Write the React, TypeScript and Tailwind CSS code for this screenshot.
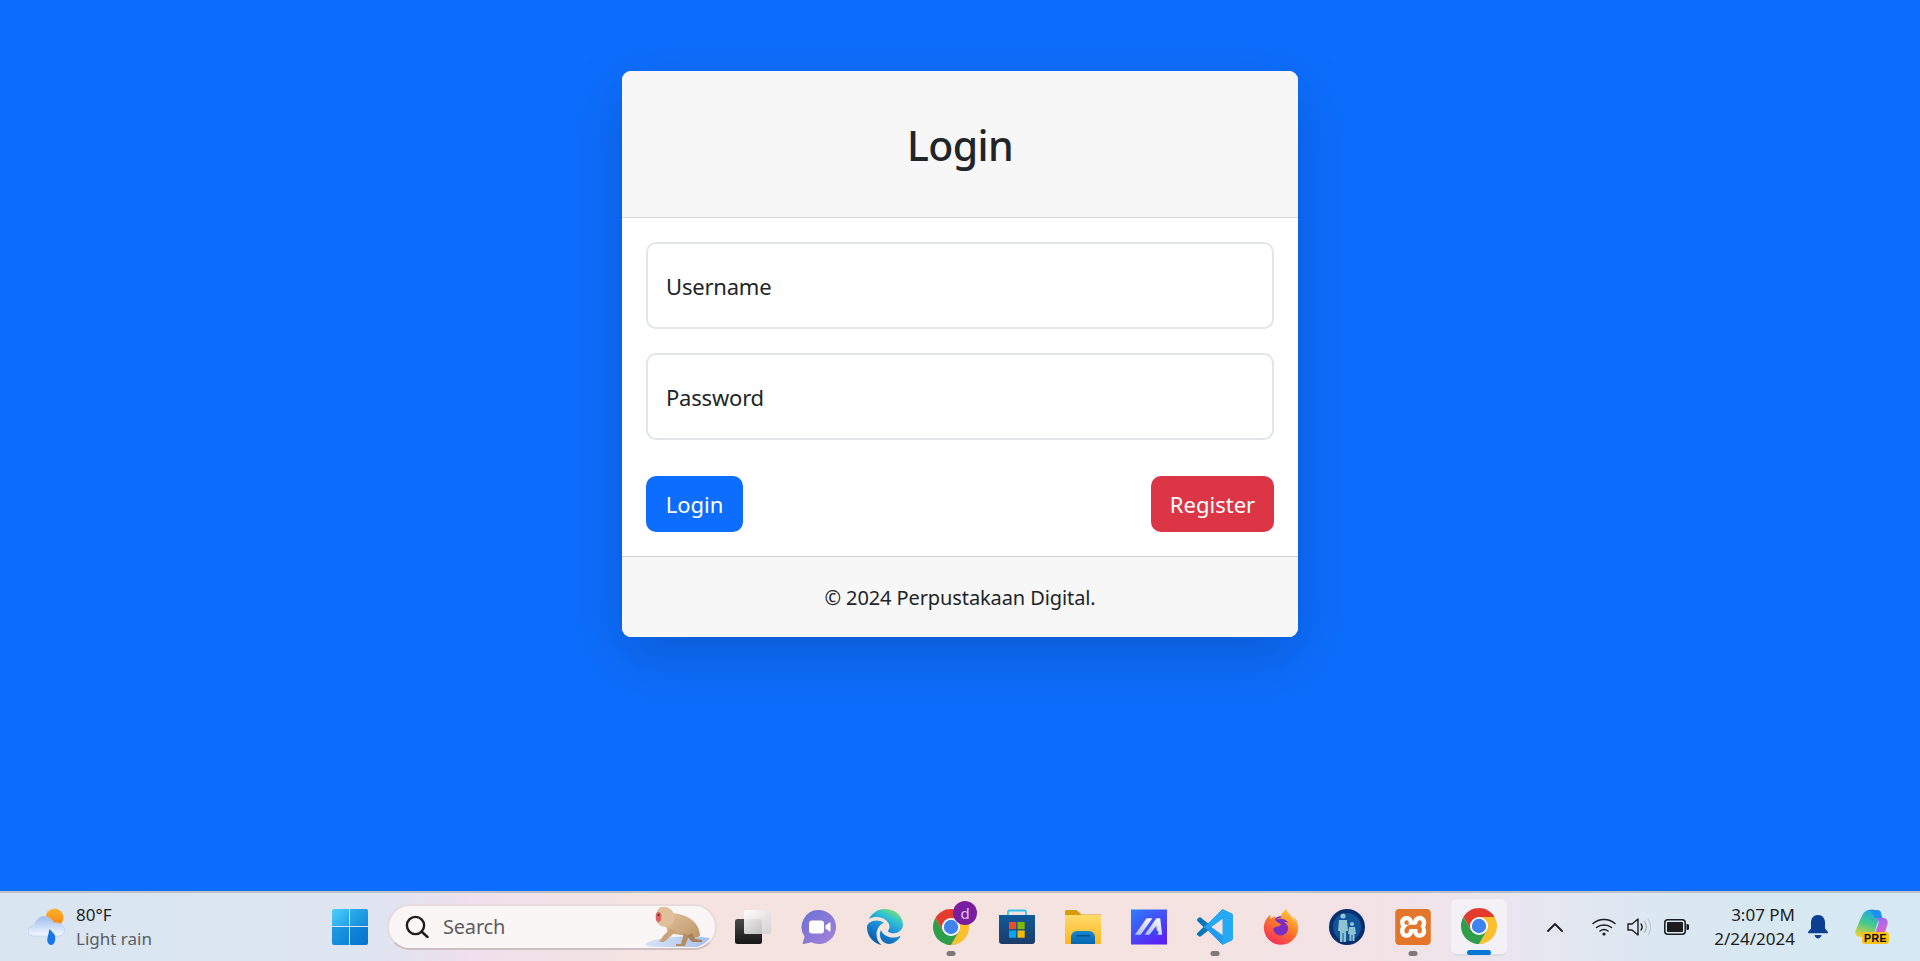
import React from "react";
import { SiXampp } from "react-icons/si";
import { FaEdge, FaFirefoxBrowser } from "react-icons/fa6";

const sans = "font-['Noto_Sans','Open_Sans',sans-serif]";

function Chrome({ size = 36 }: { size?: number }) {
  return (
    <svg width={size} height={size} viewBox="4 4 40 40">
      <path d="M41.32 14A20 20 0 0 0 6.68 14L15.34 29 24 14Z" fill="#e33b2e" />
      <path transform="rotate(120 24 24)" d="M41.32 14A20 20 0 0 0 6.68 14L15.34 29 24 14Z" fill="#fbc02d" />
      <path transform="rotate(240 24 24)" d="M41.32 14A20 20 0 0 0 6.68 14L15.34 29 24 14Z" fill="#2e9e4b" />
      <circle cx="24" cy="24" r="10" fill="#fff" />
      <circle cx="24" cy="24" r="8" fill="#3f83ee" />
    </svg>
  );
}

function Weather() {
  return (
    <svg width="38" height="38" viewBox="0 0 38 38">
      <defs>
        <linearGradient id="sun" x1="0" y1="0" x2="0" y2="1"><stop offset="0" stopColor="#fdb52c" /><stop offset="1" stopColor="#f77f12" /></linearGradient>
        <linearGradient id="cld" x1="0" y1="0" x2="0" y2="1"><stop offset="0" stopColor="#9dbcf0" /><stop offset="0.6" stopColor="#d3e1f8" /><stop offset="1" stopColor="#f4f8fd" /></linearGradient>
      </defs>
      <circle cx="26.500" cy="9.500" r="9" fill="url(#sun)" />
      <path d="M7 28c-4 0-7-2-7-5s3-5.500 6.500-5.500C7.500 11 13 7.500 18 8.500c4 1 6.500 3.500 7.500 6.500C31 14 36.500 17 36.500 22c0 3.500-3 6-7 6Z" fill="url(#cld)" stroke="#b8cdf0" strokeWidth="0.700" />
      <path d="M21.500 21l5 5.500c2 4.500 0 10.500-3 10.500s-5-3.500-4-7Z" fill="#1877e6" />
    </svg>
  );
}

function Windows() {
  return (
    <svg width="36" height="36" viewBox="0 0 36 36">
      <defs>
        <linearGradient id="w1" x1="0" y1="0" x2="1" y2="1"><stop offset="0" stopColor="#52d0fb" /><stop offset="1" stopColor="#1e9fe8" /></linearGradient>
        <linearGradient id="w2" x1="0" y1="0" x2="1" y2="1"><stop offset="0" stopColor="#2cb0ee" /><stop offset="1" stopColor="#1488dc" /></linearGradient>
        <linearGradient id="w3" x1="0" y1="0" x2="1" y2="1"><stop offset="0" stopColor="#1d9be6" /><stop offset="1" stopColor="#0f82d6" /></linearGradient>
        <linearGradient id="w4" x1="0" y1="0" x2="1" y2="1"><stop offset="0" stopColor="#1186db" /><stop offset="1" stopColor="#0773c9" /></linearGradient>
      </defs>
      <path d="M2 0h15v17H0V2a2 2 0 0 1 2-2Z" fill="url(#w1)" />
      <path d="M18 0h16a2 2 0 0 1 2 2v15H18Z" fill="url(#w2)" />
      <path d="M0 18h17v18H2a2 2 0 0 1-2-2Z" fill="url(#w3)" />
      <path d="M18 18h18v16a2 2 0 0 1-2 2H18Z" fill="url(#w4)" />
    </svg>
  );
}

function SearchGlass() {
  return (
    <svg width="24" height="24" viewBox="0 0 24 24" fill="none" stroke="#1d1d1f" strokeWidth="2.400" strokeLinecap="round">
      <circle cx="10.500" cy="10.500" r="8.600" />
      <path d="M17 17l5.500 5" />
    </svg>
  );
}

function Monkey() {
  return (
    <svg width="66" height="42" viewBox="0 0 66 42">
      <defs>
        <linearGradient id="ice" x1="0" y1="0" x2="1" y2="0"><stop offset="0" stopColor="#d9e4f5" /><stop offset="1" stopColor="#a5bfea" /></linearGradient>
        <linearGradient id="fur" x1="0" y1="0" x2="1" y2="1"><stop offset="0" stopColor="#e3c29c" /><stop offset="1" stopColor="#bd9568" /></linearGradient>
      </defs>
      <path d="M1 37c6-4 16-6 30-7 14-1 28 0 35 1-3 4-7 7-13 9H10c-4 0-8-1-9-3Z" fill="url(#ice)" />
      <path d="M22 5c10 1 20 3 26 8 5 4 8 10 8 16l-5 2-8-2-13-2-6-2c-3-6-3-13-2-20Z" fill="url(#fur)" />
      <path d="M26 22l-6 6-5 7h5l7-6 5-5Z" fill="#c9a278" />
      <path d="M40 26l-3 11h-5v2h9l4-10Z" fill="#b68e62" />
      <path d="M48 26l3 6 7 1v2h-10l-5-6Z" fill="#a98257" />
      <path d="M17 0c6-1 12 2 13 8 1 6-2 11-8 12-5 0-10-3-10-9 0-5 2-10 5-11Z" fill="#dfc09a" />
      <ellipse cx="14.500" cy="10" rx="2.800" ry="5" fill="#e0605e" />
      <circle cx="14.500" cy="8" r="0.900" fill="#402020" />
    </svg>
  );
}

function TaskView() {
  return (
    <svg width="36" height="36" viewBox="0 0 36 36">
      <defs>
        <linearGradient id="tv" x1="0" y1="0" x2="0" y2="1"><stop offset="0" stopColor="#4a4a4a" /><stop offset="1" stopColor="#161616" /></linearGradient>
        <linearGradient id="tv2" x1="0" y1="0" x2="1" y2="1"><stop offset="0" stopColor="#ffffff" stopOpacity="0.95" /><stop offset="1" stopColor="#cfcfcf" stopOpacity="0.85" /></linearGradient>
      </defs>
      <rect x="0" y="10" width="27" height="25" rx="2.500" fill="url(#tv)" />
      <rect x="9" y="1" width="27" height="24" rx="1.500" fill="url(#tv2)" />
    </svg>
  );
}

function Meet() {
  return (
    <svg width="36" height="36" viewBox="0 0 36 36">
      <defs>
        <linearGradient id="mt" x1="0" y1="0" x2="1" y2="1"><stop offset="0" stopColor="#6b6fd6" /><stop offset="1" stopColor="#a583d8" /></linearGradient>
      </defs>
      <path d="M18 1a17 17 0 1 1-7.600 32.200L3 35c-1 .2-1.600-.5-1.200-1.400l1.800-6A17 17 0 0 1 18 1Z" fill="url(#mt)" />
      <rect x="8" y="11.500" width="15" height="13" rx="3" fill="#fff" />
      <path d="M24.500 16.500l4-3c.5-.3 1 0 1 .5v8c0 .5-.5.8-1 .5l-4-3Z" fill="#fff" />
    </svg>
  );
}

function Edge() {
  return (
    <div className="relative w-9 h-9">
      <svg width="0" height="0" className="absolute">
        <defs>
          <linearGradient id="edgeg" x1="0.85" y1="0.05" x2="0.35" y2="1">
            <stop offset="0" stopColor="#7fe06a" />
            <stop offset="0.25" stopColor="#32c4cf" />
            <stop offset="0.55" stopColor="#1a8fdc" />
            <stop offset="1" stopColor="#0a5aa6" />
          </linearGradient>
        </defs>
      </svg>
      <FaEdge size={36} fill="url(#edgeg)" />
    </div>
  );
}

function Store() {
  return (
    <svg width="36" height="36" viewBox="0 0 36 36">
      <defs>
        <linearGradient id="st" x1="0" y1="0" x2="0" y2="1"><stop offset="0" stopColor="#0f5a99" /><stop offset="1" stopColor="#1c3c68" /></linearGradient>
      </defs>
      <path d="M9 8V3a1.500 1.500 0 0 1 1.500-1.500h15A1.500 1.500 0 0 1 27 3v5" fill="none" stroke="#33c4ee" strokeWidth="1.800" />
      <path d="M0 6h36v26a3 3 0 0 1-3 3H3a3 3 0 0 1-3-3Z" fill="url(#st)" />
      <rect x="10" y="13" width="7.200" height="7.200" fill="#ea4f2b" />
      <rect x="18.500" y="13" width="7.200" height="7.200" fill="#7fb800" />
      <rect x="10" y="21.500" width="7.200" height="7.200" fill="#05a6ef" />
      <rect x="18.500" y="21.500" width="7.200" height="7.200" fill="#fdb900" />
    </svg>
  );
}

function Folder() {
  return (
    <svg width="36" height="36" viewBox="0 0 36 36">
      <defs>
        <linearGradient id="fd" x1="0" y1="0" x2="0" y2="1"><stop offset="0" stopColor="#fedb6b" /><stop offset="1" stopColor="#fdb51f" /></linearGradient>
        <linearGradient id="fb" x1="0" y1="0" x2="0" y2="1"><stop offset="0" stopColor="#1686cf" /><stop offset="1" stopColor="#0766b0" /></linearGradient>
      </defs>
      <path d="M0 2.500A1.500 1.500 0 0 1 1.500 1h10l5 4.500H36V12H0Z" fill="#d59c0c" />
      <path d="M0 6h36v28a1 1 0 0 1-1 1H1a1 1 0 0 1-1-1Z" fill="url(#fd)" />
      <path d="M6 35v-7a6 6 0 0 1 6-6h12a6 6 0 0 1 6 6v7Z" fill="url(#fb)" />
      <rect x="11" y="26" width="14" height="1.500" fill="#0b4f8f" />
    </svg>
  );
}

function MTile() {
  return (
    <svg width="37" height="36" viewBox="0 0 37 36">
      <defs>
        <linearGradient id="mtile" x1="0" y1="0" x2="0.7" y2="1"><stop offset="0" stopColor="#2b7ffb" /><stop offset="1" stopColor="#5a22f5" /></linearGradient>
        <linearGradient id="mw" x1="0" y1="1" x2="1" y2="0"><stop offset="0" stopColor="#a9b8f0" /><stop offset="1" stopColor="#ffffff" /></linearGradient>
      </defs>
      <rect width="37" height="36" fill="url(#mtile)" />
      <path d="M4 26L16 9h6L10 26Z" fill="url(#mw)" />
      <path d="M14 26L26 9h4l2 17h-5l-1-9-7 9Z" fill="url(#mw)" />
      <circle cx="26" cy="24" r="2.300" fill="#2f56f5" />
    </svg>
  );
}

function VSCode() {
  return (
    <svg width="36" height="36" viewBox="0 0 100 100">
      <path d="M71 99l-40-39-20 16c-2 1.500-4 1.500-6 0l-4-3.500c-1.500-2-1.500-4 0-6L18 50 1 33.500c-1.500-2-1.500-4 0-6l4-3.500c2-1.500 4-1.500 6 0l20 16L71 1Z" fill="#0a74b8" />
      <path d="M71 1L31 40 18 50 31 60l40 39 24-11c3-1.500 5-4 5-8V20c0-4-2-6.500-5-8Z" fill="#1f9cf0" />
      <path d="M71 1l24 11c3 1.500 5 4 5 8v60c0 4-2 6.500-5 8L71 99l0-72L40 50 31 40Z" fill="#24a9f2" />
      <path d="M71 27L40 50l31 23Z" fill="#f3e2e4" />
    </svg>
  );
}

function Firefox() {
  return (
    <div className="relative w-9 h-9">
      <svg width="36" height="36" viewBox="0 0 36 36" className="absolute left-0 top-0">
        <defs>
          <linearGradient id="ffg" x1="0.8" y1="0" x2="0.2" y2="1">
            <stop offset="0" stopColor="#ffd23e" />
            <stop offset="0.45" stopColor="#ff7a2a" />
            <stop offset="1" stopColor="#f5265e" />
          </linearGradient>
        </defs>
        <circle cx="19" cy="18" r="11" fill="#7a2fc4" />
      </svg>
      <FaFirefoxBrowser size={36} fill="url(#ffg)" className="absolute left-0 top-0" />
    </div>
  );
}

function People() {
  return (
    <svg width="36" height="36" viewBox="0 0 36 36">
      <circle cx="18" cy="18" r="18" fill="#082e6e" />
      <circle cx="18" cy="18" r="14" fill="#10559c" />
      <circle cx="14" cy="7" r="2.600" fill="#8fc4cf" />
      <path d="M10 11h8l1 11h-2v11h-2.500v-9h-1v9H11V22H9Z" fill="#8fc4cf" />
      <circle cx="23" cy="15" r="2" fill="#8fc4cf" />
      <path d="M20 18h6l1 7h-1.500v7h-2v-6h-1v6h-2v-7H19Z" fill="#8fc4cf" />
    </svg>
  );
}

function Xampp() {
  return (
    <div className="w-9 h-9 rounded-[3px] bg-white overflow-hidden">
      <SiXampp size={36} color="#e4762b" />
    </div>
  );
}

function Wifi() {
  return (
    <svg width="24" height="20" viewBox="0 0 24 20" fill="none" stroke="#1c1c1c" strokeWidth="1.500" strokeLinecap="round">
      <path d="M1 6.500C7 1 17 1 23 6.500" />
      <path d="M4.500 10.500c4-3.500 11-3.500 15 0" />
      <path d="M8 14c2.500-2 5.500-2 8 0" />
      <circle cx="12" cy="17" r="1.600" fill="#1c1c1c" stroke="none" />
    </svg>
  );
}

function Speaker() {
  return (
    <svg width="24" height="20" viewBox="0 0 24 20" fill="none" strokeLinecap="round" strokeLinejoin="round">
      <path d="M1 7h4l6-5v16l-6-5H1Z" stroke="#1c1c1c" strokeWidth="1.400" />
      <path d="M14 7c1.500 2 1.500 4 0 6" stroke="#1c1c1c" strokeWidth="1.400" />
      <path d="M17.500 4.500c2.500 3.500 2.500 7.500 0 11" stroke="#a9b0b6" strokeWidth="1.200" />
      <path d="M21 2c3.500 5 3.500 11 0 16" stroke="#c2c8cc" strokeWidth="1.200" />
    </svg>
  );
}

function Battery() {
  return (
    <svg width="25" height="16" viewBox="0 0 25 16">
      <rect x="0.800" y="0.800" width="20.400" height="14.400" rx="3" fill="none" stroke="#1c1c1c" strokeWidth="1.500" />
      <rect x="3" y="3" width="16" height="10" rx="1" fill="#1c1c1c" />
      <path d="M22.500 5h1a1.500 1.500 0 0 1 1.500 1.500v3a1.500 1.500 0 0 1-1.500 1.500h-1Z" fill="#1c1c1c" />
    </svg>
  );
}

function Bell() {
  return (
    <svg width="20" height="24" viewBox="0 0 20 24">
      <path d="M10 0c4.500 0 7 3.500 7 7.500v6l3 3.500c.3.600 0 1.200-.8 1.200H.8c-.8 0-1.100-.6-.8-1.200l3-3.500v-6C3 3.500 5.500 0 10 0Z" fill="#0a3f92" />
      <path d="M6.500 20h7c-.5 2-2 3.500-3.500 3.500S7 22 6.500 20Z" fill="#0a3f92" />
    </svg>
  );
}

function Copilot() {
  return (
    <div className="relative w-9 h-9">
      <svg width="35" height="30" viewBox="0 0 34 30">
        <defs>
          <linearGradient id="c1" x1="0.6" y1="0" x2="0.3" y2="1"><stop offset="0" stopColor="#1fa7e8" /><stop offset="0.5" stopColor="#45c98a" /><stop offset="1" stopColor="#e8d23a" /></linearGradient>
          <linearGradient id="c2" x1="0.3" y1="0" x2="0.7" y2="1"><stop offset="0" stopColor="#8a6cf0" /><stop offset="0.5" stopColor="#c265e0" /><stop offset="1" stopColor="#f45fa8" /></linearGradient>
        </defs>
        <path d="M21 1c-3-1-9-1-12 3C6 9 3 17 1 22c-1 3 1 6 5 6h8c3 0 5-2 6-5l4-12c1-4 1-8-3-10Z" fill="url(#c1)" />
        <path d="M20 9h9c3 0 5 3 4 6l-3 10c-1 3-3 4-6 4h-9c3-1 5-3 6-6l3-9c.5-2-.5-5-4-5Z" fill="url(#c2)" />
        <path d="M14 1h9c3 0 4 3 4 5l1 3H20c-1-4-3-7-6-8Z" fill="#1e8ff0" />
      </svg>
      <span className="absolute left-[8px] top-[23px] w-[27px] h-[12px] rounded-[3px] bg-[#fcc21a] text-[10.500px] leading-[12px] font-bold text-black text-center tracking-[0.5px] font-['Liberation_Sans',sans-serif]">PRE</span>
    </div>
  );
}

function Dot() {
  return <span className="absolute left-1/2 -translate-x-1/2 bottom-[-11px] w-[9px] h-[5px] rounded-full bg-[#7e7878]" />;
}

function Slot({ children, dot }: { children: React.ReactNode; dot?: boolean }) {
  return (
    <div className="relative w-[66px] flex justify-center items-center">
      <div className="relative w-9 h-9 flex justify-center items-center">
        {children}
        {dot && <Dot />}
      </div>
    </div>
  );
}

export default function App() {
  return (
    <div className={`h-[961px] w-[1920px] overflow-hidden flex flex-col bg-[#0d6efd] ${sans}`}>
      <main className="h-[891px] shrink-0 pt-[71px] flex justify-center">
        <div className="w-[676px] h-[566px] rounded-[9px] bg-white shadow-[0_20px_60px_rgba(0,0,0,0.175)] flex flex-col overflow-hidden text-[#212529]">
          <header className="h-[147px] shrink-0 bg-[#f7f7f7] border-b border-[#d2d2d2] flex items-center justify-center">
            <h2 className="text-[41px] leading-none font-medium mt-[2px] tracking-[-0.6px]">Login</h2>
          </header>
          <form className="flex-1 px-6 pt-6 flex flex-col">
            <div className="h-[87px] rounded-[10px] border-2 border-[#e2e5e9] px-[18px] flex items-center pt-[2px] text-[22px] tracking-[-0.2px]">Username</div>
            <div className="h-[87px] mt-6 rounded-[10px] border-2 border-[#e2e5e9] px-[18px] flex items-center pt-[2px] text-[22px] tracking-[-0.2px]">Password</div>
            <div className="mt-9 flex justify-between">
              <button type="button" className="w-[97px] h-[56px] rounded-[10px] bg-[#0d6efd] text-white text-[22px] tracking-[0px] flex items-center justify-center">Login</button>
              <button type="button" className="w-[123px] h-[56px] rounded-[10px] bg-[#dc3545] text-white text-[22px] tracking-[0px] flex items-center justify-center">Register</button>
            </div>
          </form>
          <footer className="h-[81px] shrink-0 bg-[#f7f7f7] border-t border-[#d2d2d2] flex items-center justify-center text-[20px] tracking-[-0.1px] pt-[1px]">© 2024 Perpustakaan Digital.</footer>
        </div>
      </main>
      <div className="h-[70px] shrink-0 border-t-2 border-[#bcc1c6] bg-[linear-gradient(90deg,#d9e5f0_0%,#dbe6f1_14%,#e0e4f0_20%,#f0e0ec_25%,#f4e3de_35%,#f4e3e0_60%,#f2e2e6_72%,#e6e6f0_80%,#d9e8f2_88%,#d5e9f4_100%)] flex items-center text-[#1c1c1c]">
        <div className="w-[28px]" />
        <Weather />
        <div className="ml-[10px] w-[256px] flex flex-col text-[17px] leading-[24px]">
          <span>80°F</span>
          <span className="text-[#5a5d63]">Light rain</span>
        </div>
        <Windows />
        <div className="ml-[19px] w-[330px] h-[46px] rounded-full bg-[#fbf6f6] border-2 border-[#e6dcdc] border-b-[#cdbfc2] flex items-center pl-4 relative overflow-hidden">
          <SearchGlass />
          <span className="ml-[14px] text-[20px] text-[#5f5c60] tracking-[-0.2px]">Search</span>
          <div className="absolute right-[5px] bottom-[-1px]"><Monkey /></div>
        </div>
        <div className="ml-[3px] flex items-center">
          <Slot><TaskView /></Slot>
          <Slot><Meet /></Slot>
          <Slot><Edge /></Slot>
          <Slot dot>
            <Chrome />
            <span className="absolute left-[20px] top-[-8px] w-6 h-6 rounded-full bg-[#7a1ea1] text-[#e0c4ee] text-[15px] leading-6 text-center">d</span>
          </Slot>
          <Slot><Store /></Slot>
          <Slot><Folder /></Slot>
          <Slot><MTile /></Slot>
          <Slot dot><VSCode /></Slot>
          <Slot><Firefox /></Slot>
          <Slot><People /></Slot>
          <Slot dot><Xampp /></Slot>
          <div className="relative w-[56px] h-[57px] ml-[5px] rounded-[6px] bg-[#f3f1f6] border-b-2 border-[#dcdbe4] flex justify-center items-center">
            <Chrome />
            <span className="absolute left-[16px] bottom-[-1px] w-6 h-[5px] rounded-full bg-[#0078d4]" />
          </div>
        </div>
        <svg width="16" height="10" viewBox="0 0 16 10" fill="none" stroke="#1c1c1c" strokeWidth="1.800" strokeLinecap="round" strokeLinejoin="round" className="ml-[40px]">
          <path d="M1 9l7-7 7 7" />
        </svg>
        <div className="ml-[29px]"><Wifi /></div>
        <div className="ml-[11px]"><Speaker /></div>
        <div className="ml-[13px]"><Battery /></div>
        <div className="w-[106px] flex flex-col items-end text-[17px] leading-[24px] mt-[-1px]">
          <span>3:07 PM</span>
          <span>2/24/2024</span>
        </div>
        <div className="ml-[13px]"><Bell /></div>
        <div className="ml-[26px]"><Copilot /></div>
      </div>
    </div>
  );
}
